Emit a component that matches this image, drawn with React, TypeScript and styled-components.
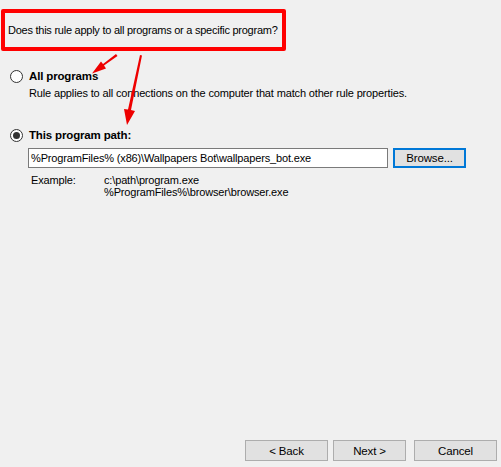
import React from "react";
import styled, { createGlobalStyle } from "styled-components";

const Global = createGlobalStyle`
  html, body { margin: 0; padding: 0; background: #f0f0f0; }
  body { font-family: "Liberation Sans", Arial, sans-serif; font-size: 11px; letter-spacing: -0.15px; color: #000; }
`;

const Page = styled.div`
  position: relative;
  width: 501px;
  height: 467px;
  background: #f0f0f0;
  display: flex;
  flex-direction: column;
  overflow: hidden;
`;

const Callout = styled.div`
  box-sizing: border-box;
  margin: 9px 0 0 1px;
  width: 285px;
  height: 42px;
  border: 4px solid #ff0000;
  border-radius: 2px;
  display: flex;
  align-items: center;
  padding: 0 0 1px 3px;
  white-space: nowrap;
  letter-spacing: -0.25px;
`;

const Option = styled.div<{ $top: number }>`
  display: grid;
  grid-template-columns: 13px 1fr;
  column-gap: 6px;
  align-items: center;
  margin: ${(p) => p.$top}px 0 0 10px;
`;

const Radio = styled.span<{ $checked?: boolean }>`
  box-sizing: border-box;
  width: 13px;
  height: 13px;
  border-radius: 50%;
  border: 1px solid #333;
  background: #fff;
  display: flex;
  align-items: center;
  justify-content: center;
  &::after {
    content: "";
    width: 7px;
    height: 7px;
    border-radius: 50%;
    background: ${(p) => (p.$checked ? "#333" : "transparent")};
  }
`;

const OptionLabel = styled.span`
  font-weight: bold;
  font-size: 11.5px;
  line-height: 15px;
`;

const Description = styled.div`
  margin: 2px 0 0 29px;
  line-height: 15px;
`;

const PathRow = styled.div`
  display: flex;
  gap: 5px;
  margin: 5px 0 0 28px;
`;

const PathInput = styled.div`
  box-sizing: border-box;
  width: 360px;
  height: 20px;
  background: #fff;
  border: 1px solid #7a7a7a;
  padding: 0 0 0 2px;
  display: flex;
  align-items: center;
  white-space: nowrap;
  overflow: hidden;
`;

const Button = styled.button<{ $focused?: boolean; $w: number }>`
  box-sizing: border-box;
  width: ${(p) => p.$w}px;
  height: ${(p) => (p.$focused ? 20 : 21)}px;
  margin: 0;
  padding: 0;
  background: #e1e1e1;
  border: ${(p) => (p.$focused ? "2px solid #0078d7" : "1px solid #adadad")};
  font-family: "Liberation Sans", Arial, sans-serif;
  font-size: 11.5px;
  letter-spacing: -0.15px;
  color: #000;
`;

const Example = styled.div`
  display: grid;
  grid-template-columns: 73px 1fr;
  margin: 6px 0 0 31px;
  line-height: 12px;
`;

const Spacer = styled.div`
  flex: 1;
`;

const Footer = styled.div`
  display: flex;
  justify-content: flex-end;
  gap: 5px;
  padding: 0 4px 6px 0;
`;

const CancelWrap = styled.div`
  margin-left: 3px;
  display: flex;
`;

const ArrowLayer = styled.svg`
  position: absolute;
  left: 0;
  top: 0;
  pointer-events: none;
`;

export default function App() {
  return (
    <>
      <Global />
      <Page>
        <Callout>Does this rule apply to all programs or a specific program?</Callout>
        <Option $top={18}>
          <Radio />
          <OptionLabel>All programs</OptionLabel>
        </Option>
        <Description>Rule applies to all connections on the computer that match other rule properties.</Description>
        <Option $top={27}>
          <Radio $checked />
          <OptionLabel>This program path:</OptionLabel>
        </Option>
        <PathRow>
          <PathInput>%ProgramFiles% (x86)\Wallpapers Bot\wallpapers_bot.exe</PathInput>
          <Button $focused $w={73}>Browse...</Button>
        </PathRow>
        <Example>
          <span>Example:</span>
          <span>
            c:\path\program.exe
            <br />
            %ProgramFiles%\browser\browser.exe
          </span>
        </Example>
        <Spacer />
        <Footer>
          <Button $w={83}>&lt; Back</Button>
          <Button $w={73}>Next &gt;</Button>
          <CancelWrap>
            <Button $w={83}>Cancel</Button>
          </CancelWrap>
        </Footer>
        <ArrowLayer width={501} height={467} viewBox="0 0 501 467">
          <g fill="#ee0000" stroke="none">
            <polygon points="116,54 117.5,56 104,65.5 106,68.5 92,73.5 101,61.5 103,64" />
            <polygon points="140,55 142,55.5 131,110 135,111 127,125 124,109 128,109.5" />
          </g>
        </ArrowLayer>
      </Page>
    </>
  );
}
